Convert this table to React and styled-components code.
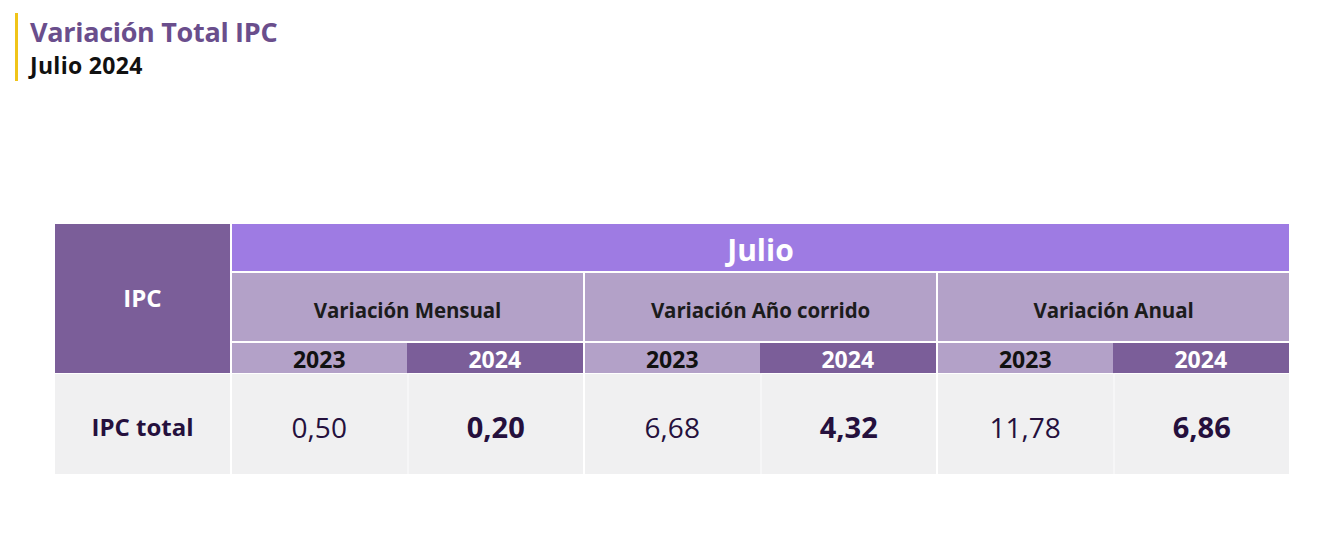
import React from 'react';
import styled, { createGlobalStyle } from 'styled-components';

const GlobalStyle = createGlobalStyle`
  html, body {
    margin: 0;
    padding: 0;
    background: #fff;
    font-family: "Open Sans", "Noto Sans", sans-serif;
  }
`;

const Page = styled.div`
  width: 1320px;
  height: 554px;
  background: #fff;
  padding-top: 13px;
  box-sizing: border-box;
`;

const Heading = styled.header`
  margin-left: 15px;
  border-left: 3px solid #f0c419;
  padding-left: 12px;
  display: flex;
  flex-direction: column;
`;

const Title = styled.h1`
  margin: 0;
  font-size: 27px;
  line-height: 37px;
  font-weight: 700;
  color: #6a4e8c;
  letter-spacing: -0.3px;
`;

const Subtitle = styled.h2`
  margin: 0;
  font-size: 23px;
  line-height: 31px;
  font-weight: 700;
  color: #111;
  letter-spacing: 0.3px;
`;

const Table = styled.div`
  margin: 143px 0 0 55px;
  width: 1234px;
  display: grid;
  grid-template-columns: 175px repeat(6, 1fr);
  grid-template-rows: 49px 70px 30px 101px;
`;

const Cell = styled.div`
  display: flex;
  align-items: center;
  justify-content: center;
  box-sizing: border-box;
  font-weight: 700;
  line-height: 1;
`;

const CornerCell = styled(Cell)`
  grid-row: 1 / 4;
  background: #7b5e99;
  color: #fff;
  font-size: 24px;
  padding-bottom: 2px;
`;

const MonthCell = styled(Cell)`
  grid-column: 2 / 8;
  background: #9e7be3;
  color: #fff;
  font-size: 30px;
  padding-top: 4px;
  border-left: 2px solid #fff;
  border-bottom: 2px solid #fff;
`;

const GroupCell = styled(Cell)`
  grid-column: span 2;
  background: #b3a1c8;
  color: #1c1c1c;
  font-size: 20.5px;
  padding-top: 6px;
  border-left: 2px solid #fff;
  border-bottom: 2px solid #fff;
  letter-spacing: -0.1px;
`;

const YearCell = styled(Cell)`
  background: ${p => (p.$current ? '#7b5e99' : '#b3a1c8')};
  color: ${p => (p.$current ? '#fff' : '#111')};
  border-left: ${p => (p.$current ? 'none' : '2px solid #fff')};
  font-size: 23px;
  padding-top: 2px;
`;

const LabelCell = styled(Cell)`
  background: #f0f0f1;
  color: #25103d;
  font-size: 24px;
  padding-top: 5px;
  border-top: 1px solid #fff;
`;

const ValueCell = styled(Cell)`
  background: #f0f0f1;
  color: #25103d;
  font-size: ${p => (p.$current ? '29px' : '28px')};
  font-weight: ${p => (p.$current ? 700 : 400)};
  padding-top: 5px;
  border-left: 2px solid ${p => (p.$current ? '#f6f6f7' : '#fff')};
  border-top: 1px solid #fff;
`;

const groups = [
  { name: 'Variación Mensual', values: ['0,50', '0,20'] },
  { name: 'Variación Año corrido', values: ['6,68', '4,32'] },
  { name: 'Variación Anual', values: ['11,78', '6,86'] },
];

export default function App() {
  return (
    <Page>
      <GlobalStyle />
      <Heading>
        <Title>Variación Total IPC</Title>
        <Subtitle>Julio 2024</Subtitle>
      </Heading>
      <Table>
        <CornerCell>IPC</CornerCell>
        <MonthCell>Julio</MonthCell>
        {groups.map(g => (
          <GroupCell key={g.name}>{g.name}</GroupCell>
        ))}
        {groups.map(g => (
          <React.Fragment key={g.name}>
            <YearCell>2023</YearCell>
            <YearCell $current>2024</YearCell>
          </React.Fragment>
        ))}
        <LabelCell>IPC total</LabelCell>
        {groups.map(g => (
          <React.Fragment key={g.name}>
            <ValueCell>{g.values[0]}</ValueCell>
            <ValueCell $current>{g.values[1]}</ValueCell>
          </React.Fragment>
        ))}
      </Table>
    </Page>
  );
}
